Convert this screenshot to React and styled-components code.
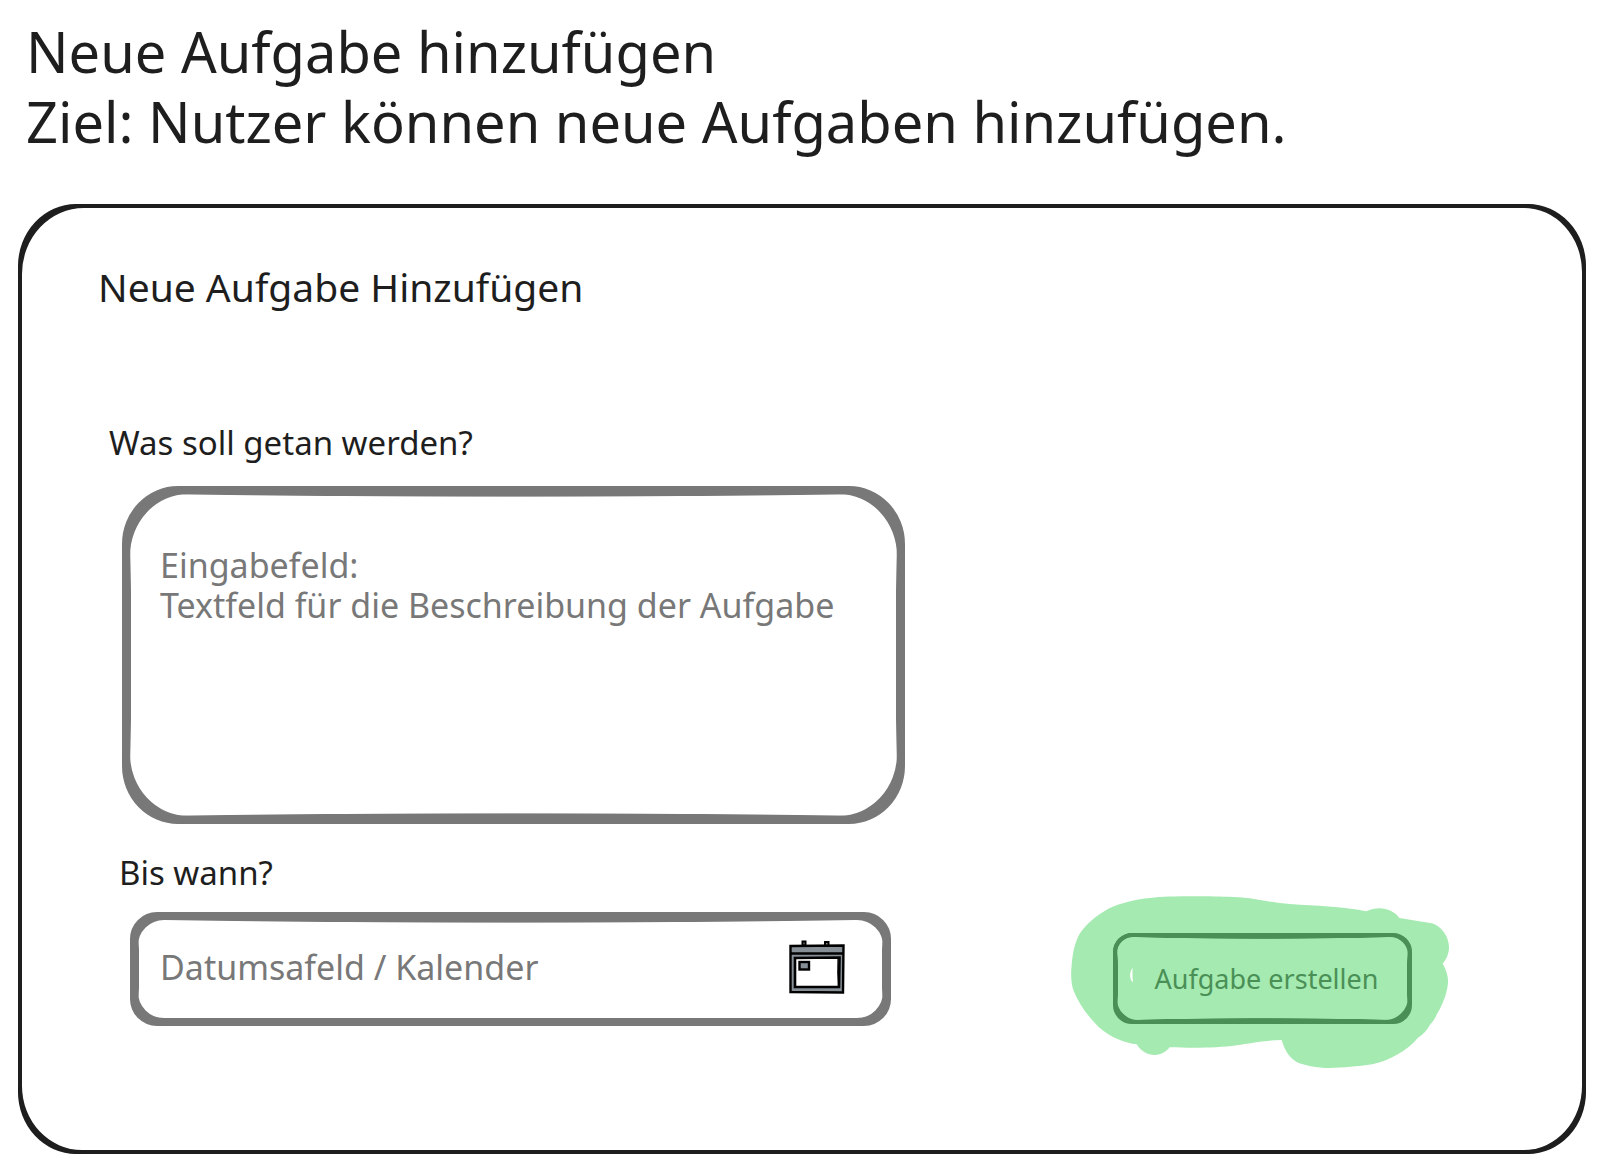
import React from "react";
import styled, { createGlobalStyle, css } from "styled-components";

const ink = "#1e1e1e";
const pencil = "#787878";
const leaf = "#4a9056";
const marker = "#a5eab1";

const GlobalStyle = createGlobalStyle`
  *, *::before, *::after { box-sizing: border-box; }
  body {
    margin: 0;
    background: #fff;
    color: ${ink};
    font-family: Excalifont, "Noto Sans", sans-serif;
  }
  button, input, textarea { font: inherit; }
`;

/* A second pass of the pen over a border, rounding the corners a little wider. */
const secondStroke = (width, color, radius) => css`
  position: relative;
  &::before {
    content: "";
    position: absolute;
    inset: -${width}px;
    border: ${width}px solid ${color};
    border-radius: ${radius};
    pointer-events: none;
  }
`;

/* Edges that swell towards their middle, as if the pen pressed harder there. */
const swell = (depth, color, horizontal, vertical) => css`
  background:
    radial-gradient(70% ${horizontal * 3 + 1}px at 50% -${horizontal * 2 + 1}px, ${color} 92%, transparent) no-repeat,
    radial-gradient(70% ${horizontal * 3 + 1}px at 50% calc(100% + ${horizontal * 2 + depth}px), ${color} 92%, transparent) no-repeat,
    radial-gradient(${vertical * 3 + 1}px 70% at -${vertical * 2 + 1}px 50%, ${color} 92%, transparent) no-repeat,
    radial-gradient(${vertical * 3 + 1}px 70% at calc(100% + ${vertical * 2 + 1}px) 50%, ${color} 92%, transparent) no-repeat;
`;

const Page = styled.div`
  padding: 16px 18px 18px;
`;

const Intro = styled.header`
  padding-left: 8px;
  margin-bottom: 48px;
  font-size: 56px;
  line-height: 70px;
`;

const Title = styled.h1`
  margin: 0;
  font: inherit;
`;

const Goal = styled.p`
  margin: 0;
`;

const Panel = styled.main`
  border: 4px solid ${ink};
  border-radius: 58px / 62px;
  padding: 54px 170px 124px 76px;
  ${secondStroke(4, ink, "66px 62px 62px 64px / 70px 68px 68px 68px")}
`;

const PanelTitle = styled.h2`
  margin: 0 0 111px;
  font-size: 39px;
  font-weight: 400;
  line-height: 50px;
`;

const Form = styled.form`
  display: grid;
  grid-template-columns: 11fr 7fr;
  align-items: end;
  padding-left: 11px;
`;

const Fields = styled.div`
  display: flex;
  flex-direction: column;
  gap: 29px;
`;

const Field = styled.div`
  display: flex;
  flex-direction: column;
  gap: ${(p) => (p.$inset ? 19 : 23)}px;
  padding: ${(p) => (p.$inset ? "0 14px 0 10px" : "0")};
`;

const Label = styled.label`
  font-size: 33px;
  line-height: 40px;
`;

const Box = styled.div`
  display: flex;
  align-items: center;
  border: 8px solid ${pencil};
  color: ${pencil};
`;

const TextBox = styled(Box)`
  height: 338px;
  margin-left: 13px;
  border-radius: 56px / 58px;
  ${swell(1, pencil, 3, 1)}
  ${secondStroke(8, pencil, "66px / 70px")}
`;

const DateBox = styled(Box)`
  height: 114px;
  margin-left: 11px;
  padding-right: 38px;
  border-radius: 27px;
  ${swell(4, pencil, 3, 1)}
  ${secondStroke(8, pencil, "34px")}
`;

const control = css`
  flex: 1;
  min-width: 0;
  border: 0;
  outline: 0;
  background: transparent;
  color: inherit;
  font-size: 34px;
  line-height: 40px;
  &::placeholder { color: inherit; opacity: 1; }
`;

const TextArea = styled.textarea`
  ${control}
  height: 100%;
  padding: 51px 20px 20px 30px;
  resize: none;
`;

const DateInput = styled.input`
  ${control}
  padding: 0 0 4px 22px;
`;

const IconButton = styled.button`
  display: flex;
  padding: 0 0 4px;
  border: 0;
  background: none;
`;

const Action = styled.div`
  position: relative;
  justify-self: end;
  margin-bottom: 2px;
`;

const Highlight = styled.svg`
  position: absolute;
  left: -43px;
  top: -38px;
`;

const SubmitButton = styled.button`
  display: block;
  width: 299px;
  height: 91px;
  padding: 0 0 0 8px;
  border: 4px solid ${leaf};
  border-radius: 19px;
  color: ${leaf};
  font-size: 27px;
  line-height: 32px;
  ${swell(1, leaf, 2, 1)}
  ${secondStroke(4, leaf, "20px 22px 27px 25px")}
`;

function CalendarIcon() {
  return (
    <svg width="56" height="54" viewBox="0 0 56 54" aria-hidden="true" stroke="#000" strokeWidth="2">
      <rect x="13.5" y="1.5" width="3" height="4" fill="#868e96" />
      <rect x="36" y="2" width="3.5" height="4.5" fill="#868e96" />
      <path d="M1.5 6 54.5 5.5 54 52.5 1.5 52Z" fill="#868e96" strokeWidth="2.4" />
      <path d="M1.5 13.5H54.5" strokeWidth="2.6" />
      <path d="M6 18 50.5 17.5 50 47H6Z" fill="#fff" strokeWidth="2.6" />
      <path d="M49 19 48.8 33 49.5 46" fill="none" strokeWidth="1.2" />
      <rect x="10.5" y="22" width="9.5" height="7.5" fill="#868e96" strokeWidth="2.4" />
    </svg>
  );
}

function MarkerHighlight() {
  return (
    <Highlight width="380" height="175" viewBox="60 45 1140 525" aria-hidden="true">
      <path
        fill={marker}
        fillRule="evenodd"
        d="M300 54C360 47 480 49 550 51C620 54 660 68 720 72C800 78 870 78 949 94C985 76 1028 85 1048 114L1135 128C1170 131 1196 166 1197 200C1197 222 1188 240 1178 250C1190 275 1195 290 1194 310C1190 350 1172 384 1161 402C1155 416 1147 428 1140 434C1132 450 1118 464 1104 473C1072 512 1015 542 970 552C920 560 880 563 840 564C800 564 760 556 740 546C715 532 703 507 695 480C640 481 600 490 560 496C500 505 420 504 359 502C335 534 285 534 260 493C225 489 180 472 145 440C110 405 85 368 70 330C63 310 62 280 65 255C68 215 77 175 97 150C120 122 145 103 175 86C215 68 260 57 300 54ZM248 264C238 274 237 298 249 307C247 292 247 279 248 264Z"
      />
    </Highlight>
  );
}

export default function App() {
  return (
    <>
      <GlobalStyle />
      <Page>
        <Intro>
          <Title>Neue Aufgabe hinzufügen</Title>
          <Goal>Ziel: Nutzer können neue Aufgaben hinzufügen.</Goal>
        </Intro>
        <Panel>
          <PanelTitle>Neue Aufgabe Hinzufügen</PanelTitle>
          <Form onSubmit={(event) => event.preventDefault()}>
            <Fields>
              <Field>
                <Label htmlFor="task">Was soll getan werden?</Label>
                <TextBox>
                  <TextArea
                    id="task"
                    placeholder={"Eingabefeld:\nTextfeld für die Beschreibung der Aufgabe"}
                  />
                </TextBox>
              </Field>
              <Field $inset>
                <Label htmlFor="due">Bis wann?</Label>
                <DateBox>
                  <DateInput id="due" type="text" placeholder="Datumsafeld / Kalender" />
                  <IconButton type="button" aria-label="Kalender">
                    <CalendarIcon />
                  </IconButton>
                </DateBox>
              </Field>
            </Fields>
            <Action>
              <MarkerHighlight />
              <SubmitButton type="submit">Aufgabe erstellen</SubmitButton>
            </Action>
          </Form>
        </Panel>
      </Page>
    </>
  );
}
